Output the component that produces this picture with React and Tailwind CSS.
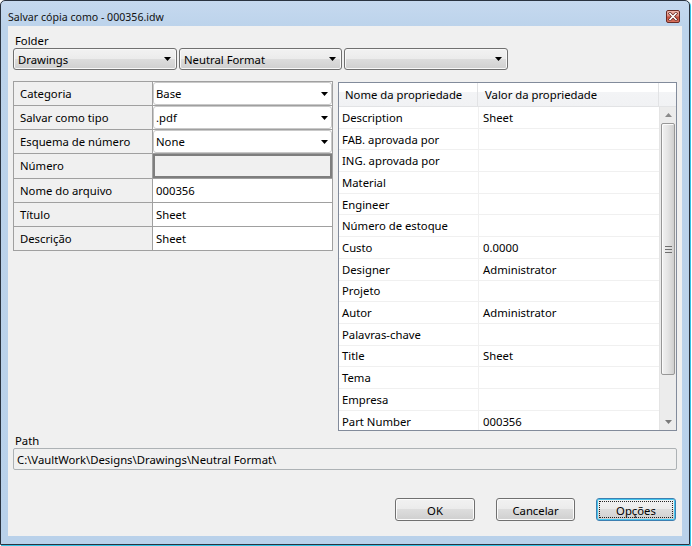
import React from "react";

function Arrow({ color = "#000" }) {
  return (
    <svg width="7" height="4" viewBox="0 0 7 4" className="flex-none">
      <path d="M0 0H7L3.5 4Z" fill={color} />
    </svg>
  );
}

function UpArrow({ color = "#7a7a7a" }) {
  return (
    <svg width="7" height="4" viewBox="0 0 7 4" className="flex-none">
      <path d="M0 4H7L3.5 0Z" fill={color} />
    </svg>
  );
}

function TopCombo({ text, className }) {
  return (
    <div
      className={
        "h-[22px] flex items-center justify-between pl-[4px] pr-[5px] border border-[#707070] rounded-[3px] bg-[linear-gradient(#f2f2f2_0%,#ebebeb_50%,#dddddd_50%,#cfcfcf_100%)] shadow-[inset_0_0_0_1px_#f8f8f8] " +
        className
      }
    >
      <span className="leading-[16px] pt-[1px]">{text}</span>
      <Arrow />
    </div>
  );
}

function LeftRow({ label, children, className }) {
  return (
    <div className={"flex " + className}>
      <div className="w-[139px] flex-none border-r border-[#a0a0a0] bg-[#f0f0f0] pl-[6px] pt-[1px] flex items-center">
        {label}
      </div>
      <div className="flex-1 min-w-0 bg-white flex">{children}</div>
    </div>
  );
}

function CellCombo({ text }) {
  return (
    <div className="flex-1 flex items-center justify-between bg-white border border-[#c9c9c9] rounded-[3px] pl-[2px] pr-[3px]">
      <span className="pt-[1px]">{text}</span>
      <Arrow />
    </div>
  );
}

function CellText({ text }) {
  return <div className="flex-1 flex items-center pl-[3px] pt-[2px]">{text}</div>;
}

const props = [
  ["Description", "Sheet"],
  ["FAB. aprovada por", ""],
  ["ING. aprovada por", ""],
  ["Material", ""],
  ["Engineer", ""],
  ["Número de estoque", ""],
  ["Custo", "0.0000"],
  ["Designer", "Administrator"],
  ["Projeto", ""],
  ["Autor", "Administrator"],
  ["Palavras-chave", ""],
  ["Title", "Sheet"],
  ["Tema", ""],
  ["Empresa", ""],
  ["Part Number", "000356"],
];

function Button({ text, className = "", focused = false }) {
  return (
    <div
      className={
        "relative h-[23px] flex items-center justify-center rounded-[3px] border bg-[linear-gradient(#f2f2f2_0%,#ebebeb_50%,#dddddd_50%,#cfcfcf_100%)] " +
        (focused
          ? "border-[#3c7fb1] shadow-[inset_0_0_0_1px_#46c6ee] "
          : "border-[#707070] shadow-[inset_0_0_0_1px_#fbfbfb] ") +
        className
      }
    >
      <span className="leading-[16px] pt-[2px]">{text}</span>
      {focused && (
        <div className="absolute inset-[2px] border border-dotted border-[#222]"></div>
      )}
    </div>
  );
}

export default function App() {
  return (
    <div className="w-[692px] h-[546px] bg-white overflow-hidden font-['Noto_Sans','Open_Sans',sans-serif] text-[11.3px] text-black">
      <div className="w-[690px] h-[545px] border border-[#2a3340] rounded-t-[5px] bg-[linear-gradient(#c6d9ef_0px,#bcd3eb_26px,#b9d1ea_100%)] shadow-[1px_1px_0_#35c3e6] flex flex-col">
        {/* Title bar */}
        <div className="h-[25px] flex-none flex items-start">
          <div className="mt-[8px] ml-[7px] leading-[16px] text-[10.6px] text-[#111]">
            Salvar cópia como - 000356.idw
          </div>
          <div className="ml-auto mt-[9px] mr-[9px] w-[14px] h-[13px] rounded-[2px] border border-[#6a2a24] bg-[linear-gradient(#f0b8ad_0%,#dc8a7c_45%,#c5503f_55%,#d9735f_100%)] flex items-center justify-center">
            <svg width="10" height="9" viewBox="0 0 10 9">
              <path d="M2 1.5L8 7.5M8 1.5L2 7.5" stroke="#5a1a14" strokeWidth="3" strokeLinecap="square" />
              <path d="M2 1.5L8 7.5M8 1.5L2 7.5" stroke="#ffffff" strokeWidth="1.6" strokeLinecap="square" />
            </svg>
          </div>
        </div>

        {/* Client */}
        <div className="flex-1 mx-[7px] mb-[8px] bg-[#f0f0f0] flex flex-col px-[5px] pt-[7px]">
          <div className="leading-[15px] pl-[2px]">Folder</div>
          <div className="flex gap-[2px]">
            <TopCombo text="Drawings" className="w-[164px]" />
            <TopCombo text="Neutral Format" className="w-[163px]" />
            <TopCombo text="" className="w-[164px]" />
          </div>

          <div className="flex gap-[5px] mt-[11px] h-[350px]">
            {/* Left grid */}
            <div className="w-[320px] h-[170px] flex-none border border-[#a0a0a0] flex flex-col">
              <LeftRow label="Categoria" className="h-[24px] border-b border-[#a0a0a0]">
                <CellCombo text="Base" />
              </LeftRow>
              <LeftRow label="Salvar como tipo" className="h-[24px] border-b border-[#a0a0a0]">
                <CellCombo text=".pdf" />
              </LeftRow>
              <LeftRow label="Esquema de número" className="h-[24px] border-b border-[#a0a0a0]">
                <CellCombo text="None" />
              </LeftRow>
              <LeftRow label="Número" className="h-[25px] border-b border-[#a0a0a0]">
                <div className="flex-1 bg-[#f0f0f0] border-2 border-[#7e7e7e]"></div>
              </LeftRow>
              <LeftRow label="Nome do arquivo" className="h-[24px] border-b border-[#a0a0a0]">
                <CellText text="000356" />
              </LeftRow>
              <LeftRow label="Título" className="h-[24px] border-b border-[#a0a0a0]">
                <CellText text="Sheet" />
              </LeftRow>
              <LeftRow label="Descrição" className="h-[23px]">
                <CellText text="Sheet" />
              </LeftRow>
            </div>

            {/* Right grid */}
            <div className="flex-1 mt-[1px] h-[349px] border border-[#828b9b] bg-white flex flex-col overflow-hidden">
              <div className="h-[24px] flex-none flex bg-[linear-gradient(#ffffff_0%,#ffffff_40%,#f3f4f6_41%,#f1f2f4_100%)] border-b border-[#e2e3e5]">
                <div className="w-[139px] flex-none border-r border-[#e2e3e5] pl-[6px] pt-[2px] flex items-center">
                  Nome da propriedade
                </div>
                <div className="w-[181px] flex-none border-r border-[#e2e3e5] pl-[7px] pt-[2px] flex items-center">
                  Valor da propriedade
                </div>
                <div className="flex-1"></div>
              </div>
              <div className="flex-1 min-h-0 flex">
                <div className="flex-1 min-w-0 flex flex-col overflow-hidden">
                  {props.map(([n, v], i) => (
                    <div key={i} className="h-[21.7px] flex-none flex border-b border-[#f0f0f0]">
                      <div className="w-[139px] flex-none pl-[3px] pt-[2px] flex items-center">{n}</div>
                      <div className="flex-1 border-l border-[#f0f0f0] pl-[4px] pt-[2px] flex items-center">{v}</div>
                    </div>
                  ))}
                </div>
                <div className="w-[17px] flex-none bg-[#ececec] border-l border-[#e4e4e4] flex flex-col">
                  <div className="h-[16px] flex-none flex items-center justify-center">
                    <UpArrow color="#8a8a8a" />
                  </div>
                  <div className="h-[252px] flex-none mx-[1px] rounded-[2px] border border-[#979797] bg-[linear-gradient(90deg,#f2f2f2_0%,#e4e4e4_50%,#cfcfcf_100%)] shadow-[inset_1px_1px_0_#fbfbfb] flex flex-col items-center justify-center gap-[2px]">
                    <div className="w-[7px] h-[1px] bg-[#6f6f6f]"></div>
                    <div className="w-[7px] h-[1px] bg-[#6f6f6f]"></div>
                    <div className="w-[7px] h-[1px] bg-[#6f6f6f]"></div>
                  </div>
                  <div className="flex-1"></div>
                  <div className="h-[17px] flex-none flex items-center justify-center">
                    <Arrow color="#7a7a7a" />
                  </div>
                </div>
              </div>
            </div>
          </div>

          <div className="leading-[15px] pl-[2px] mt-[2px]">Path</div>
          <div className="h-[22px] border border-[#adb2b5] rounded-[2px] bg-[#f0f0f0] flex items-center pl-[3px] pt-[2px]">
            C:\VaultWork\Designs\Drawings\Neutral Format\
          </div>

          <div className="flex justify-end gap-[21px] mt-[28px] mr-[1px]">
            <Button text="OK" className="w-[80px]" />
            <Button text="Cancelar" className="w-[79px]" />
            <Button text="Opções" className="w-[80px]" focused />
          </div>
        </div>
      </div>
    </div>
  );
}
